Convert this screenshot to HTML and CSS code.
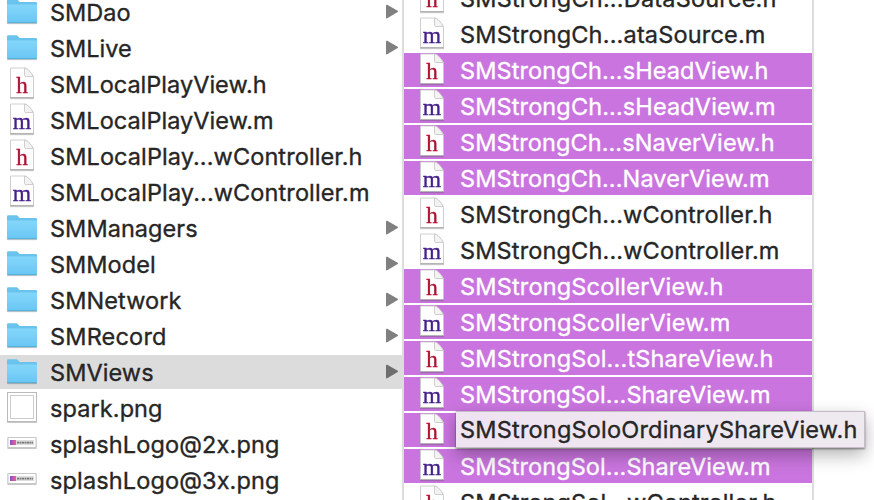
FILE: index.html
```
<!DOCTYPE html>
<html lang="en">
<head>
<meta charset="utf-8">
<title>Files</title>
<link rel="stylesheet" href="styles.css">
</head>
<body>
<svg class="defs" width="0" height="0">
  <defs>
    <linearGradient id="blue" x1="0" y1="0" x2="0" y2="1"><stop offset="0" stop-color="#84d6fa"/><stop offset="1" stop-color="#69c6f4"/></linearGradient>
    <linearGradient id="logo" x1="0" y1="0" x2="1" y2="0"><stop offset="0" stop-color="#8b50c8"/><stop offset="1" stop-color="#f0628c"/></linearGradient>
    <symbol id="folder" viewBox="0 0 32 32">
      <path d="M1 5.500q0-1.200 1.200-1.200h8.300q.8 0 1.300.6l1.300 1.700q.4.500 1.100.5H29.800q1.200 0 1.200 1.200V27H1z" fill="#69c3ec"/>
      <path d="M1 9.500h30v17.300q0 1.200-1.200 1.200H2.200Q1 28 1 26.800z" fill="url(#blue)"/>
      <path d="M1.500 27.700h29" stroke="#54a9d0" stroke-width=".9"/>
    </symbol>
    <symbol id="doc" viewBox="0 0 32 32">
      <path d="M4.500 1H18.500q2 0 3.500 1.700l4 4.500q1.500 1.700 1.500 3.500V30.500h-23z" fill="#fff" stroke="#cbcbcb" stroke-width=".9"/>
      <path d="M18.500 1v7.200q0 1.300 1.300 1.300h7.200Q26.500 7.200 22.500 3 20 1 18.500 1z" fill="#f3f3f3" stroke="#c9c9c9" stroke-width=".9"/>
      <path d="M4.200 30.700h23.600" stroke="#aaa" stroke-width=".9"/>
    </symbol>
  </defs>
</svg>
<main class="browser">
  <ul class="column left" id="left"></ul>
  <ul class="column right" id="right"></ul>
  <div class="tooltip"><span class="name" data-width="397">SMStrongSoloOrdinaryShareView.h</span></div>
</main>
<script src="files.js"></script>
</body>
</html>
```
FILE: styles.css
```
* { box-sizing: border-box; }
body { margin: 0; background: #fff; color: #262626; font: 400 23.5px/34px Inter, "Liberation Sans", sans-serif; }
.defs { position: absolute; }
.browser { position: relative; display: flex; width: 874px; height: 500px; overflow: hidden; }
.column { list-style: none; margin: 0; padding: 0; display: flex; flex-direction: column; gap: 2px; flex: none; height: 540px; }
.left { width: 404px; border-right: 2px solid #dcdcdc; margin-top: -5px; }
.right { width: 410px; border-right: 2px solid #dcdcdc; margin-top: -19px; }
.row { display: flex; flex: none; height: 34px; padding-left: 6px; position: relative; }
.right .row { padding-left: 12px; }
.current { background: #dcdcdc; }
.selected { background: #ca75df; color: #fff; }
.icon { width: 32px; height: 34px; margin-right: 12px; flex: none; display: block; }
.icon svg { display: block; width: 32px; height: 32px; overflow: visible; filter: drop-shadow(0 1px .6px rgba(0,0,0,.22)); }
.icon text { font-family: "Liberation Serif", serif; text-anchor: middle; stroke-width: .35px; }
.h { fill: #b01233; stroke: #b01233; font-size: 23px; }
.m { fill: #45208c; stroke: #45208c; font-size: 23.500px; }
.name { display: inline-block; white-space: nowrap; flex: none; -webkit-text-stroke: .35px currentColor; }
.row .name { line-height: 36px; }
.arrow { position: absolute; right: 3px; top: 9px; width: 14px; height: 15px; fill: #808080; }
.current .arrow { fill: #6e6e6e; }
.tooltip { position: absolute; left: 456px; top: 411px; width: 409px; height: 37px; padding-left: 4px; line-height: 36px; background: linear-gradient(90deg, #efe3f1, #efeaf0); border: 1px solid #c5bcc7; border-width: 1px 1px 1px 0; box-shadow: 0 1px 2px rgba(0,0,0,.45), 0 7px 18px rgba(0,0,0,.3); }
```
FILE: files.js
```
const left = [
  ["folder", "SMDao", 80], ["folder", "SMLive", 81], ["h", "SMLocalPlayView.h", 216], ["m", "SMLocalPlayView.m", 223],
  ["h", "SMLocalPlay...wController.h", 312], ["m", "SMLocalPlay...wController.m", 319],
  ["folder", "SMManagers", 147], ["folder", "SMModel", 105], ["folder", "SMNetwork", 131], ["folder", "SMRecord", 116],
  ["folder", "SMViews", 103, "current"], ["image", "spark.png", 112], ["logo", "splashLogo@2x.png", 229], ["logo", "splashLogo@3x.png", 229]
];
const right = [
  ["h", "SMStrongCh...DataSource.h", 316], ["m", "SMStrongCh...ataSource.m", 305],
  ["h", "SMStrongCh...sHeadView.h", 308, "selected"], ["m", "SMStrongCh...sHeadView.m", 315, "selected"],
  ["h", "SMStrongCh...sNaverView.h", 314, "selected"], ["m", "SMStrongCh...NaverView.m", 309, "selected"],
  ["h", "SMStrongCh...wController.h", 312], ["m", "SMStrongCh...wController.m", 319],
  ["h", "SMStrongScollerView.h", 263, "selected"], ["m", "SMStrongScollerView.m", 270, "selected"],
  ["h", "SMStrongSol...tShareView.h", 313, "selected"], ["m", "SMStrongSol...ShareView.m", 310, "selected"],
  ["h", "", 0, "selected"], ["m", "SMStrongSol...ShareView.m", 310, "selected"],
  ["h", "SMStrongSol...wController.h", 316]
];
const art = {
  folder: '<use href="#folder"/>',
  h: '<use href="#doc"/><text class="h" x="16" y="25.500">h</text>',
  m: '<use href="#doc"/><text class="m" x="16" y="26">m</text>',
  image: '<rect x="1.500" y="1.500" width="29" height="29" fill="#fff" stroke="#bbb"/><rect x="4.500" y="4.500" width="23" height="23" fill="#fff" stroke="#ccc"/>',
  logo: '<rect x="2" y="10.500" width="28" height="10" fill="#fff" stroke="#c8c8c8"/><rect x="4" y="13" width="6" height="5" fill="url(#logo)"/><path d="M10 13h18v5H10z" fill="#ddd"/><path d="M11 15.600h16" stroke="#777" stroke-width="1.800" stroke-dasharray="2 .5"/>'
};
function fill(id, rows) {
  document.getElementById(id).innerHTML = rows.map(([icon, name, width, state]) =>
    `<li class="row ${state || ""}"><span class="icon"><svg viewBox="0 0 32 32">${art[icon]}</svg></span>${name ? `<span class="name" data-width="${width}">${name}</span>` : ""}${icon === "folder" ? '<svg class="arrow" viewBox="0 0 14 15"><path d="M1 1.500Q1 .3 2.200.8L12.700 6.700q.9.600 0 1.200L2.200 14.300Q1 14.800 1 13.500z"/></svg>' : ""}</li>`
  ).join("");
}
fill("left", left);
fill("right", right);

document.querySelectorAll(".name").forEach(el => {
  const extra = (Number(el.dataset.width) + .6 - el.getBoundingClientRect().width) / el.textContent.length;
  el.style.letterSpacing = extra.toFixed(3) + "px";
});
```
